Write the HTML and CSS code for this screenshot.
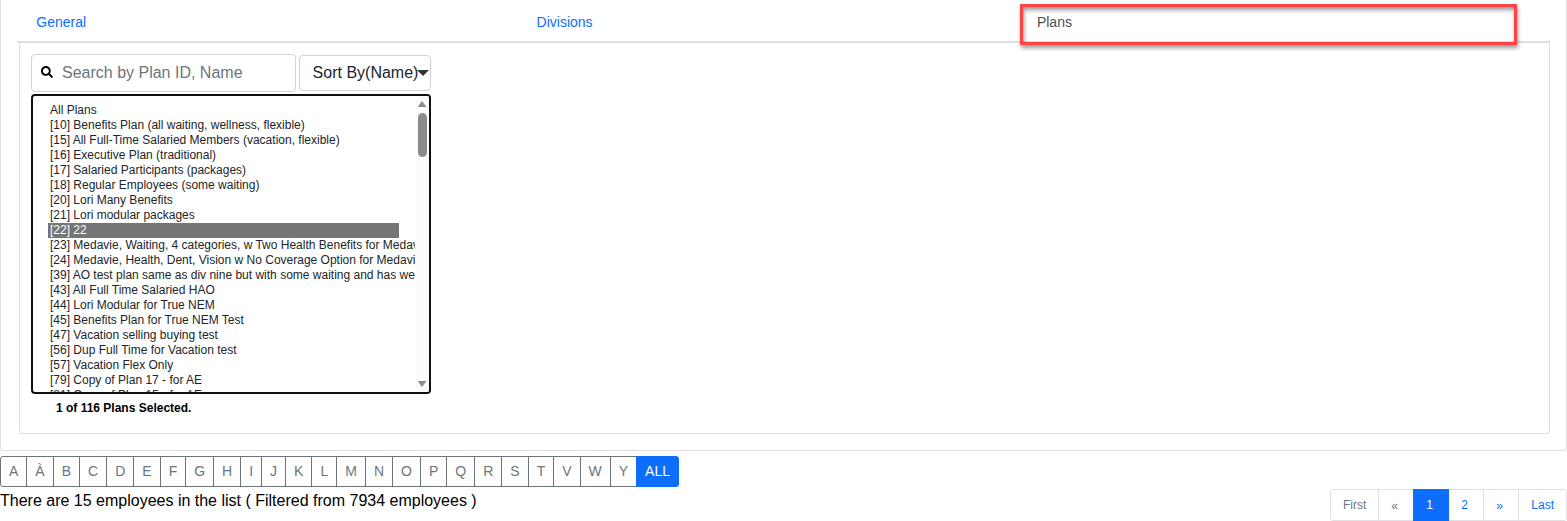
FILE: index.html
```html
<!DOCTYPE html>
<html lang="en">
<head>
<meta charset="utf-8">
<title>Employees</title>
<link rel="stylesheet" href="styles.css">
</head>
<body>
<section class="card">
  <nav class="tabs">
    <a class="tab">General</a>
    <a class="tab">Divisions</a>
    <a class="tab active">Plans<span class="highlight"></span></a>
  </nav>
  <div class="panel">
    <div class="filters">
      <div class="search">
        <svg class="search-icon" viewBox="0 0 512 512"><path d="M505 442.700 405.300 343c-4.500-4.500-10.600-7-17-7H372c27.600-35.300 44-79.700 44-128C416 93.100 322.900 0 208 0S0 93.100 0 208s93.100 208 208 208c48.300 0 92.700-16.400 128-44v16.300c0 6.400 2.500 12.500 7 17l99.700 99.700c9.400 9.400 24.600 9.400 33.900 0l28.300-28.300c9.400-9.400 9.400-24.600.1-34zM208 336c-70.700 0-128-57.200-128-128 0-70.700 57.200-128 128-128 70.700 0 128 57.200 128 128 0 70.700-57.200 128-128 128z"/></svg>
        <span>Search by Plan ID, Name</span>
      </div>
      <div class="sort"><span>Sort By(Name)</span><i class="caret"></i></div>
    </div>
    <div class="listbox">
      <ul class="options">
        <li>All Plans</li>
        <li>[10] Benefits Plan (all waiting, wellness, flexible)</li>
        <li>[15] All Full-Time Salaried Members (vacation, flexible)</li>
        <li>[16] Executive Plan (traditional)</li>
        <li>[17] Salaried Participants (packages)</li>
        <li>[18] Regular Employees (some waiting)</li>
        <li>[20] Lori Many Benefits</li>
        <li>[21] Lori modular packages</li>
        <li class="selected">[22] 22</li>
        <li>[23] Medavie, Waiting, 4 categories, w Two Health Benefits for Medav</li>
        <li>[24] Medavie, Health, Dent, Vision w No Coverage Option for Medavi</li>
        <li>[39] AO test plan same as div nine but with some waiting and has we</li>
        <li>[43] All Full Time Salaried HAO</li>
        <li>[44] Lori Modular for True NEM</li>
        <li>[45] Benefits Plan for True NEM Test</li>
        <li>[47] Vacation selling buying test</li>
        <li>[56] Dup Full Time for Vacation test</li>
        <li>[57] Vacation Flex Only</li>
        <li>[79] Copy of Plan 17 - for AE</li>
        <li>[81] Copy of Plan 15 - for AE</li>
      </ul>
      <div class="scrollbar"><i class="arrow up"></i><i class="thumb"></i><i class="arrow down"></i></div>
    </div>
    <div class="count">1 of 116 Plans Selected.</div>
  </div>
</section>
<div class="letters">
  <a>A</a><a>À</a><a>B</a><a>C</a><a>D</a><a>E</a><a>F</a><a>G</a><a>H</a><a>I</a><a>J</a><a>K</a><a>L</a><a>M</a><a>N</a><a>O</a><a>P</a><a>Q</a><a>R</a><a>S</a><a>T</a><a>V</a><a>W</a><a>Y</a><a class="on">ALL</a>
</div>
<footer class="footer">
  <div class="summary">There are 15 employees in the list ( Filtered from 7934 employees )</div>
  <div class="pages"><a class="off">First</a><a class="off num sym">«</a><a class="num on">1</a><a class="num">2</a><a class="num sym">»</a><a>Last</a></div>
</footer>
</body>
</html>
```
FILE: styles.css
```css
* { box-sizing: border-box; }
body {
  margin: 0;
  width: 1567px;
  height: 521px;
  overflow: hidden;
  background: #fff;
  color: #000;
  font-family: "Liberation Sans", Arial, sans-serif;
  font-size: 16px;
}
.card {
  height: 451px;
  padding: 1px 16px 0;
  border: 1px solid #dfdfdf;
  border-top: 0;
  border-radius: 0 0 4px 4px;
}
.tabs {
  display: flex;
  height: 42px;
  border-bottom: 2px solid #dedede;
}
.tab {
  position: relative;
  width: 500.3px;
  padding: 12px 0 0 19.3px;
  font-size: 14px;
  line-height: 18px;
  color: #0d6efd;
}
.tab.active { color: #495057; }
.highlight {
  position: absolute;
  left: 2px;
  top: 3px;
  width: 497px;
  height: 41px;
  border: 3px solid #fd4343;
  box-shadow: 1px 3px 4px rgba(0, 0, 0, .4), inset 1px 3px 4px rgba(0, 0, 0, .4);
}
.panel {
  width: 1531px;
  height: 391px;
  margin-left: 2px;
  padding: 11px;
  border: 1px solid #dedede;
  border-top: 0;
  border-radius: 0 0 4px 4px;
}
.filters { display: flex; gap: 3px; width: 400px; height: 38px; }
.search {
  display: flex;
  align-items: center;
  width: 265px;
  height: 38px;
  padding-left: 9px;
  gap: 9px;
  border: 1px solid #ced4da;
  border-radius: 4px;
  color: #6c757d;
}
.search-icon { width: 12px; height: 12px; margin-top: -2px; fill: #000; }
.sort {
  display: flex;
  align-items: center;
  width: 132px;
  height: 36px;
  margin-top: 1px;
  padding-left: 12.6px;
  border: 1px solid #ced4da;
  border-radius: 4px;
  color: #212529;
  white-space: nowrap;
}
.caret {
  margin-left: -1.6px;
  border: 6px solid transparent;
  border-top-color: #333;
  border-bottom: 0;
}
.listbox {
  display: flex;
  width: 400px;
  height: 300px;
  margin-top: 2px;
  border: 2px solid #101010;
  border-radius: 4px;
  overflow: hidden;
}
.options {
  width: 382px;
  height: 296px;
  margin: 0;
  padding: 7px 0 0 15px;
  overflow: hidden;
  list-style: none;
  font-size: 12px;
  line-height: 15px;
  color: #212529;
  white-space: nowrap;
}
.options li { width: 351px; height: 15px; padding-left: 2px; }
.options .selected { background: #767676; color: #fff; }
.scrollbar {
  display: flex;
  flex-direction: column;
  align-items: center;
  width: 14px;
  padding: 5px 0 5px;
  background: #fcfcfc;
}
.arrow { width: 9px; height: 6px; background: #8b8b8b; }
.up { clip-path: polygon(50% 0, 100% 100%, 0 100%); }
.down { margin-top: auto; clip-path: polygon(0 0, 100% 0, 50% 100%); }
.thumb { width: 9px; height: 44px; margin-top: 6px; border-radius: 5px; background: #8b8b8b; }
.count { padding: 7px 0 0 25px; font-size: 12px; font-weight: bold; line-height: 15px; }
.letters { display: flex; height: 31px; margin-top: 5px; }
.letters a {
  padding: 4px 8px;
  margin-left: -1px;
  border: 1px solid #6c757d;
  color: #6c757d;
  font-size: 14px;
  line-height: 21px;
}
.letters a:first-child { margin-left: 0; border-radius: 3px 0 0 3px; }
.letters .on { border-color: #0d6efd; background: #0d6efd; color: #fff; border-radius: 0 3px 3px 0; }
.footer { display: flex; justify-content: space-between; padding-top: 2px; }
.summary { line-height: 24px; }
.pages { display: flex; height: 32px; }
.pages a {
  padding: 6px 12px;
  margin-left: -1px;
  border: 1px solid #dee2e6;
  color: #0d6efd;
  font-size: 12px;
  line-height: 18px;
}
.pages .num { padding-right: 15.33px; }
.pages .sym { padding-top: 7px; }
.pages .off { color: #6c757d; }
.pages .on { position: relative; border-color: #0d6efd; background: #0d6efd; color: #fff; }
.pages a:first-child { border-radius: 3px 0 0 3px; }
.pages a:last-child { border-radius: 0 3px 3px 0; }
```
